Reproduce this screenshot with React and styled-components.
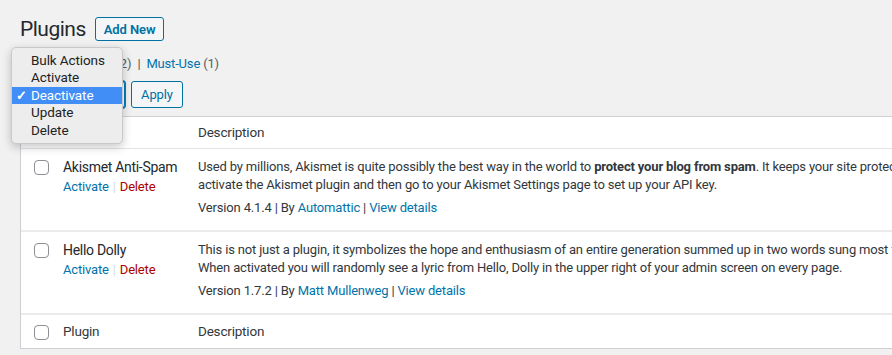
import React from "react";
import styled, { createGlobalStyle } from "styled-components";

const Global = createGlobalStyle`
  html, body { margin: 0; padding: 0; background: #f1f1f1; overflow: hidden; }
  body { font-family: Roboto, "Noto Sans", sans-serif; font-size: 13px; letter-spacing: -0.17px; color: #32373c; }
  * { box-sizing: border-box; }
`;

const Wrap = styled.div`
  position: relative;
  padding: 14px 0 0 20px;
  width: 1500px;
`;

const Header = styled.div`
  display: flex;
  align-items: center;
  gap: 9px;
`;

const Title = styled.h1`
  margin: 0;
  font-size: 21px;
  font-weight: 400;
  letter-spacing: -0.5px;
  line-height: 30px;
  color: #23282d;
`;

const Button = styled.button`
  font-family: inherit;
  font-size: 13px;
  letter-spacing: -0.1px;
  font-weight: ${(p) => (p.$bold ? 600 : 400)};
  color: #0071a1;
  background: #f3f5f6;
  border: 1px solid #0071a1;
  border-radius: 3px;
  height: ${(p) => p.$h}px;
  padding: 0 ${(p) => p.$px}px;
  line-height: 1;
  cursor: pointer;
`;

const Subsub = styled.ul`
  list-style: none;
  margin: 11px 0 0;
  padding: 0;
  display: flex;
  line-height: 18px;
  color: #646970;
`;

const SubItem = styled.li`
  white-space: pre;
  color: ${(p) => (p.$current ? "#000" : "#555")};
  font-weight: ${(p) => (p.$current ? 600 : 400)};
`;

const Link = styled.a`
  color: ${(p) => (p.$danger ? "#a00" : "#0073aa")};
  text-decoration: none;
`;

const Count = styled.span`
  color: #555d66;
  font-weight: 400;
`;

const Sep = styled.span`
  color: ${(p) => (p.$light ? "#ddd" : "inherit")};
  padding: 0 ${(p) => p.$pad}px;
`;

const TableNav = styled.div`
  display: flex;
  gap: 6px;
  margin-top: 8px;
  height: 27px;
`;

const SelectBox = styled.div`
  width: 105px;
  height: 27px;
  border: 1px solid #007cba;
  box-shadow: 0 0 0 1px #007cba;
  border-radius: 3px;
  background: #fff;
`;

const Table = styled.div`
  margin-top: 8px;
  background: #fff;
  border: 1px solid #ccd0d4;
  box-shadow: 0 1px 1px rgba(0, 0, 0, 0.04);
  display: grid;
  grid-template-columns: 32px 135px 1fr;
`;

const Row = styled.div`
  display: contents;
`;

const Cell = styled.div`
  padding: ${(p) => p.$pad};
  border-bottom: ${(p) => (p.$last ? "none" : p.$head ? "1px solid #e2e4e7" : "2px solid #ebebeb")};
  white-space: nowrap;
  line-height: ${(p) => (p.$head ? 19 : 18)}px;
  font-size: ${(p) => (p.$head ? 13.5 : 13)}px;
  letter-spacing: ${(p) => (p.$head ? -0.2 : -0.17)}px;
  color: #32373c;
`;

const Check = styled.span`
  display: block;
  width: 15px;
  height: 15px;
  border: 1px solid #8c8f94;
  border-radius: 4px;
  background: #fff;
`;

const PluginName = styled.div`
  font-size: 14px;
  letter-spacing: -0.3px;
  line-height: 19px;
  color: #23282d;
`;

const Actions = styled.div`
  font-size: 13px;
  line-height: 19px;
`;

const Desc = styled.p`
  margin: 0 0 5px;
  line-height: 18px;
`;

const Meta = styled.div`
  line-height: 18px;
`;

const Menu = styled.ul`
  position: absolute;
  left: 11px;
  top: 47px;
  width: 112px;
  margin: 0;
  padding: 4px 0;
  list-style: none;
  background: #ededed;
  border: 1px solid #c9c9c9;
  border-radius: 5px;
  box-shadow: 0 3px 10px rgba(0, 0, 0, 0.22);
  font-family: Roboto, "Liberation Sans", sans-serif;
  font-size: 13.5px;
  letter-spacing: -0.1px;
  z-index: 10;
`;

const MenuItem = styled.li`
  position: relative;
  height: 17.4px;
  line-height: 17.4px;
  padding-left: 19px;
  color: ${(p) => (p.$active ? "#fff" : "#222")};
  background: ${(p) => (p.$active ? "#418ef6" : "transparent")};
`;

const Tick = styled.span`
  position: absolute;
  left: 4px;
  top: 0;
  font-size: 13px;
  font-weight: 700;
`;

const plugins = [
  {
    name: "Akismet Anti-Spam",
    lines: [
      <>
        Used by millions, Akismet is quite possibly the best way in the world to <b>protect your blog from spam</b>. It
        keeps your site protected even while you sleep. To get started:
      </>,
      "activate the Akismet plugin and then go to your Akismet Settings page to set up your API key.",
    ],
    version: "4.1.4",
    author: "Automattic",
  },
  {
    name: "Hello Dolly",
    lines: [
      "This is not just a plugin, it symbolizes the hope and enthusiasm of an entire generation summed up in two words sung most famously by Louis Armstrong: Hello, Dolly.",
      "When activated you will randomly see a lyric from Hello, Dolly in the upper right of your admin screen on every page.",
    ],
    version: "1.7.2",
    author: "Matt Mullenweg",
  },
];

export default function App() {
  return (
    <>
      <Global />
      <Wrap>
        <Header>
          <Title>Plugins</Title>
          <Button $bold $h={24} $px={8}>Add New</Button>
        </Header>
        <Subsub>
          <SubItem $current>All <Count>(2)</Count></SubItem>
          <SubItem><Sep $pad={6}>|</Sep><Link>Inactive <Count>(2)</Count></Link></SubItem>
          <SubItem><Sep $pad={6}>|</Sep><Link>Must-Use</Link> <Count>(1)</Count></SubItem>
        </Subsub>
        <TableNav>
          <SelectBox />
          <Button $h={27} $px={9}>Apply</Button>
        </TableNav>
        <Table>
          <Row>
            <Cell $head $pad="8px 0 7px 13px"><Check /></Cell>
            <Cell $head $pad="6px 10px 6px 10px">Plugin</Cell>
            <Cell $head $pad="6px 10px 6px 10px">Description</Cell>
          </Row>
          {plugins.map((p) => (
            <Row key={p.name}>
              <Cell $pad="11px 0 0 13px"><Check /></Cell>
              <Cell $pad="9px 10px 0 10px">
                <PluginName>{p.name}</PluginName>
                <Actions>
                  <Link>Activate</Link>
                  <Sep $light $pad={4}>|</Sep>
                  <Link $danger>Delete</Link>
                </Actions>
              </Cell>
              <Cell $pad="9px 10px 13px 10px">
                <Desc>
                  {p.lines[0]}
                  <br />
                  {p.lines[1]}
                </Desc>
                <Meta>
                  Version {p.version} | By <Link>{p.author}</Link> | <Link>View details</Link>
                </Meta>
              </Cell>
            </Row>
          ))}
          <Row>
            <Cell $last $head $pad="10px 0 7px 13px"><Check /></Cell>
            <Cell $last $head $pad="7px 10px 7px 10px">Plugin</Cell>
            <Cell $last $head $pad="7px 10px 7px 10px">Description</Cell>
          </Row>
        </Table>
        <Menu>
          <MenuItem>Bulk Actions</MenuItem>
          <MenuItem>Activate</MenuItem>
          <MenuItem $active><Tick>✓</Tick>Deactivate</MenuItem>
          <MenuItem>Update</MenuItem>
          <MenuItem>Delete</MenuItem>
        </Menu>
      </Wrap>
    </>
  );
}
